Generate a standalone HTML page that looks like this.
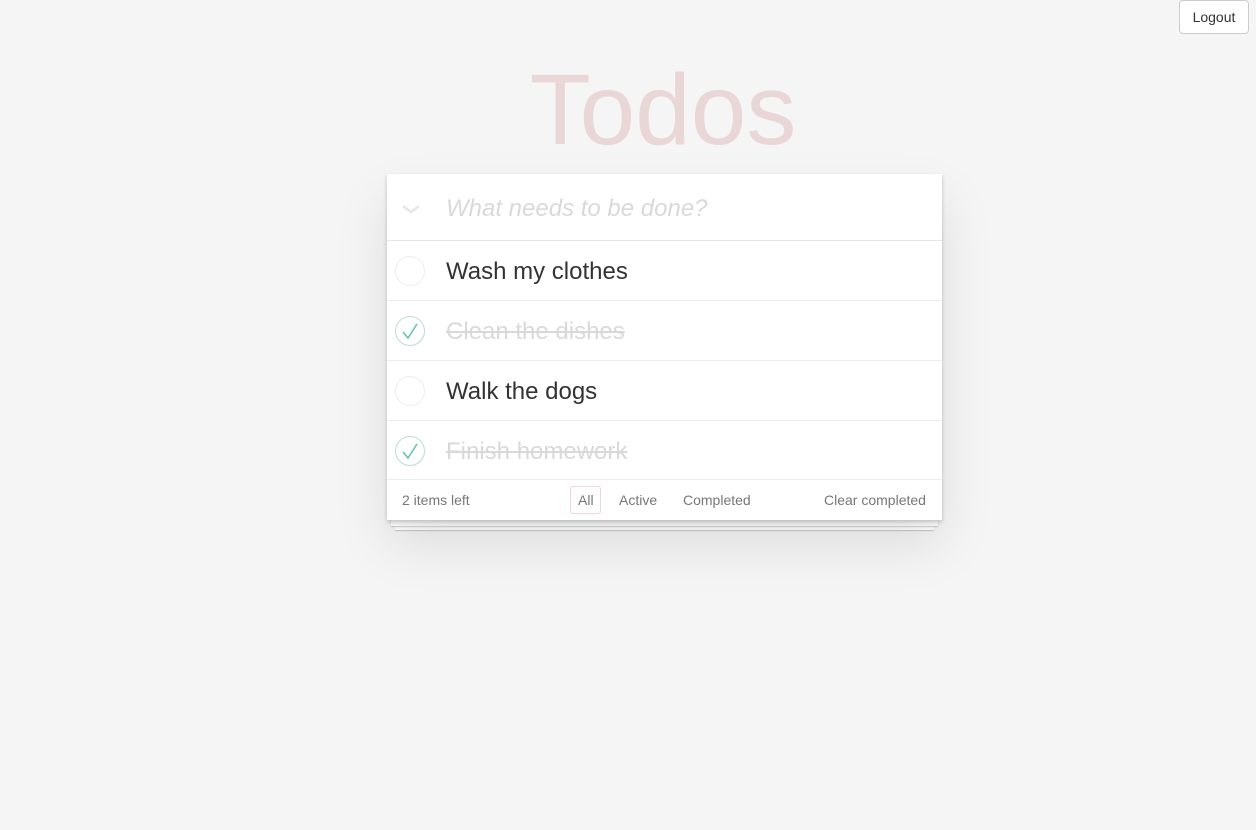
<!DOCTYPE html>
<html><head><style>
*{margin:0;padding:0;box-sizing:border-box}
body{width:1256px;height:830px;background:#f5f5f5;font-family:"Liberation Sans",Helvetica,Arial,sans-serif;position:relative;overflow:hidden}
.logout{position:absolute;left:1179px;top:0;width:70px;height:34px;border:1px solid #ccc;border-radius:4px;background:#fff;font-size:14px;color:#333;text-align:center;line-height:32px}
h1{position:absolute;left:0;width:1326px;top:55px;text-align:center;font-size:100px;color:#e9d6d6;line-height:110px;font-weight:normal}
.card{position:absolute;left:387px;top:174px;width:555px;height:346px;background:#fff;box-shadow:0 2px 4px rgba(0,0,0,.2),0 25px 50px rgba(0,0,0,.1)}
.st1,.st2{position:absolute;background:#fff;box-shadow:0 1px 1px rgba(0,0,0,.2)}
.st1{left:391px;width:547px;top:520px;height:6px}
.st2{left:395px;width:539px;top:526px;height:4px}
.inp{height:67px;border-bottom:1px solid #e6e6e6;position:relative}
.inp span{position:absolute;left:59px;top:21px;font-size:24px;font-style:italic;color:#d9d9d9}
.row{height:60px;border-bottom:1px solid #ededed;position:relative}
.row.last{height:59px}
.row .t{position:absolute;left:59px;top:17px;font-size:24px;color:#333}
.row.done .t{color:#d9d9d9;text-decoration:line-through}
.row svg{position:absolute;left:8px;top:14px}
.foot{position:absolute;top:306px;left:0;width:555px;height:40px;font-size:14px;color:#777}
.foot span{position:absolute;top:12px}
.all{position:absolute;left:183px;top:6px;width:31px;height:28px;border:1px solid #efd5d5;border-radius:3px}
</style></head><body>
<div class="logout">Logout</div>
<h1>Todos</h1>
<div class="st2"></div><div class="st1"></div>
<div class="card">
<div class="inp"><svg style="position:absolute;left:14px;top:30px" width="20" height="10"><path d="M2 2 L10 8 L18 2" stroke="#e6e6e6" stroke-width="2.5" fill="none"/></svg><span>What needs to be done?</span></div>
<div class="row"><svg width="32" height="32"><circle cx="15" cy="16" r="14.5" fill="none" stroke="#ededed"/></svg><span class="t">Wash my clothes</span></div>
<div class="row done"><svg width="32" height="32"><circle cx="15" cy="16" r="14.5" fill="none" stroke="#bddad5"/><path d="M8 17 L13 23 L22 9" stroke="#5dc2af" stroke-width="1.5" fill="none"/></svg><span class="t">Clean the dishes</span></div>
<div class="row"><svg width="32" height="32"><circle cx="15" cy="16" r="14.5" fill="none" stroke="#ededed"/></svg><span class="t">Walk the dogs</span></div>
<div class="row done last"><svg width="32" height="32"><circle cx="15" cy="16" r="14.5" fill="none" stroke="#bddad5"/><path d="M8 17 L13 23 L22 9" stroke="#5dc2af" stroke-width="1.5" fill="none"/></svg><span class="t">Finish homework</span></div>
<div class="foot"><span style="left:15px">2 items left</span><div class="all"></div><span style="left:191px">All</span><span style="left:232px">Active</span><span style="left:296px">Completed</span><span style="left:437px">Clear completed</span></div>
</div>
</body></html>
